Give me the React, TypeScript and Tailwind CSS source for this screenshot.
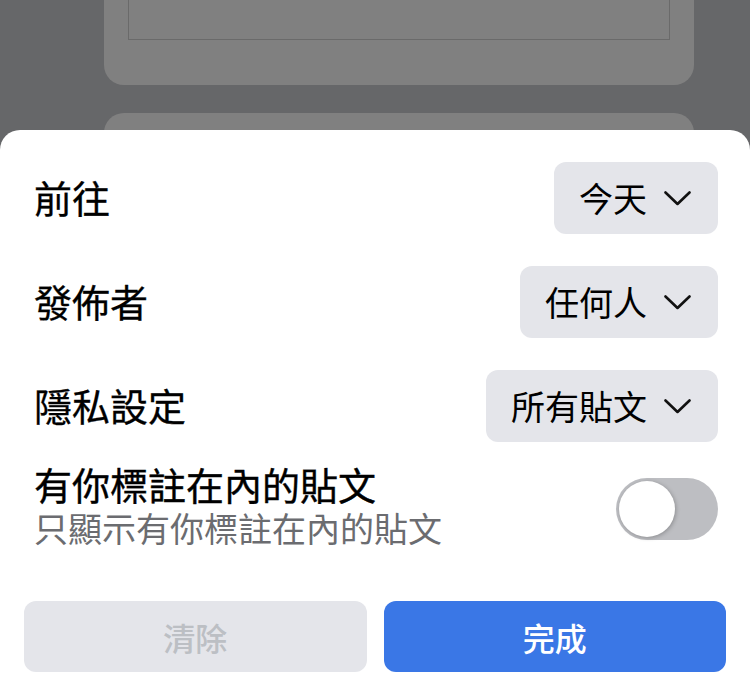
import React from "react";

const font = { fontFamily: '"Noto Sans CJK TC", "Noto Sans", sans-serif' };

function Chevron() {
  return (
    <svg width="27" height="15" viewBox="0 0 27 15" fill="none">
      <path d="M1.5 1.5 L13.5 13 L25.5 1.5" stroke="#111" strokeWidth="2.6" strokeLinecap="round" strokeLinejoin="round" />
    </svg>
  );
}

function Row({ label, value }: { label: string; value: string }) {
  return (
    <div className="flex h-[72px] items-center justify-between">
      <span className="-mt-[3px] text-[38px] leading-none text-black [-webkit-text-stroke:0.3px_black]">{label}</span>
      <div className="flex h-[72px] items-center gap-[17px] rounded-[12px] bg-[#e4e5ea] pl-[25px] pr-[27px]">
        <span className="text-[34px] leading-none text-black">{value}</span>
        <Chevron />
      </div>
    </div>
  );
}

export default function App() {
  return (
    <div className="flex h-[697px] w-[750px] flex-col overflow-hidden bg-[#666769]" style={font}>
      <div className="h-[130px] shrink-0 overflow-hidden">
        <div className="ml-[104px] mr-[56px] -mt-[40px] flex h-[125px] flex-col rounded-b-[20px] bg-[#808080] px-[24px]">
          <div className="h-[80px] border border-t-0 border-[#6a6a6a]"></div>
        </div>
        <div className="ml-[104px] mr-[56px] mt-[28px] h-[60px] rounded-t-[20px] bg-[#808080]"></div>
      </div>
      <div className="flex flex-1 flex-col rounded-t-[20px] bg-white pt-[32px]">
        <div className="flex flex-col gap-[32px] pl-[34px] pr-[32px]">
          <Row label="前往" value="今天" />
          <Row label="發佈者" value="任何人" />
          <Row label="隱私設定" value="所有貼文" />
        </div>
        <div className="mt-[19px] flex items-center justify-between pl-[34px] pr-[32px]">
          <div className="flex flex-col">
            <span className="text-[38px] leading-[46px] text-black [-webkit-text-stroke:0.4px_black]">有你標註在內的貼文</span>
            <span className="text-[34px] leading-[42px] text-[#6b6c70]">只顯示有你標註在內的貼文</span>
          </div>
          <div className="mt-[8px] flex h-[62px] w-[102px] items-center rounded-full bg-[#bdbec2] p-[3px]">
            <div className="h-[56px] w-[56px] rounded-full bg-white shadow-[1px_1px_4px_rgba(0,0,0,0.25)]"></div>
          </div>
        </div>
        <div className="mt-[52px] flex gap-[17px] px-[24px]">
          <button className="flex h-[71px] flex-1 items-center justify-center rounded-[12px] bg-[#e4e5ea] text-[32px] font-medium text-[#bcbfc4]">
            清除
          </button>
          <button className="flex h-[71px] flex-1 items-center justify-center rounded-[12px] bg-[#3a77e6] text-[32px] font-medium text-white">
            完成
          </button>
        </div>
      </div>
    </div>
  );
}
